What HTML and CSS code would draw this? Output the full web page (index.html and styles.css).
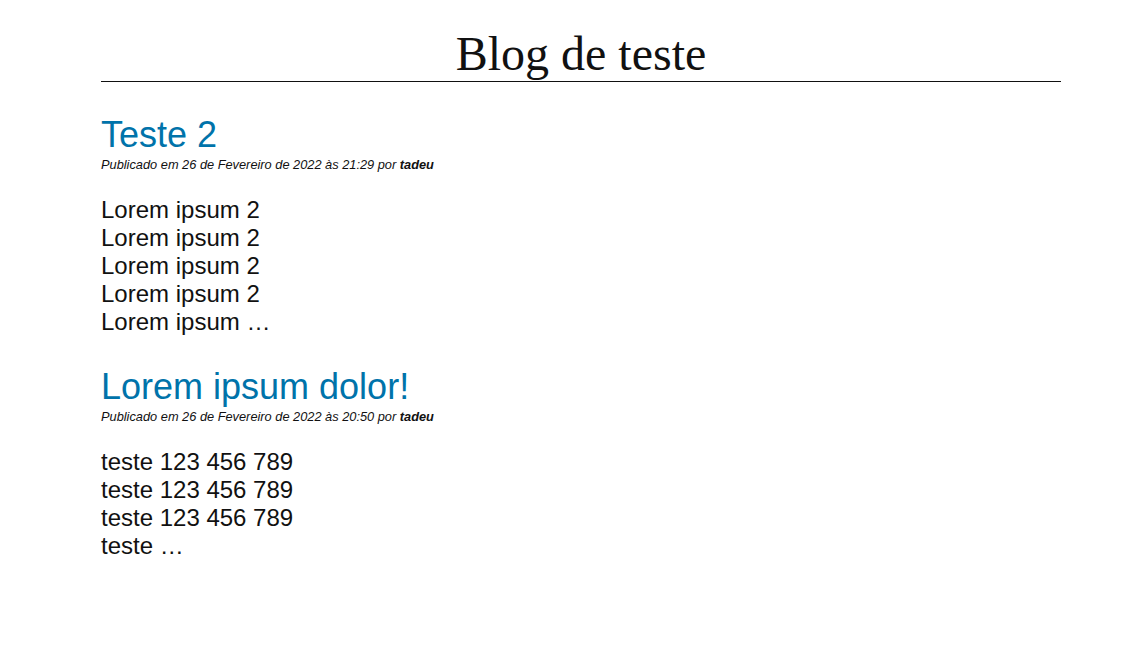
FILE: index.html
```html
<!DOCTYPE html>
<html lang="pt-BR">
<head>
<meta charset="utf-8">
<title>Blog de teste</title>
<link rel="stylesheet" href="styles.css">
</head>
<body>
<div class="page">
  <header class="site-header">
    <h1 class="site-title">Blog de teste</h1>
  </header>
  <main class="posts">
    <article class="post">
      <h2 class="post-title"><a href="#">Teste 2</a></h2>
      <p class="post-meta">Publicado em 26 de Fevereiro de 2022 às 21:29 por <strong>tadeu</strong></p>
      <div class="post-excerpt">
        Lorem ipsum 2<br>
        Lorem ipsum 2<br>
        Lorem ipsum 2<br>
        Lorem ipsum 2<br>
        Lorem ipsum …
      </div>
    </article>
    <article class="post">
      <h2 class="post-title"><a href="#">Lorem ipsum dolor!</a></h2>
      <p class="post-meta">Publicado em 26 de Fevereiro de 2022 às 20:50 por <strong>tadeu</strong></p>
      <div class="post-excerpt">
        teste 123 456 789<br>
        teste 123 456 789<br>
        teste 123 456 789<br>
        teste …
      </div>
    </article>
  </main>
</div>
</body>
</html>
```

FILE: styles.css
```css
html, body {
  margin: 0;
  padding: 0;
  background: #ffffff;
}

body {
  font-family: "Liberation Sans", Arial, sans-serif;
  color: #111111;
}

.page {
  width: 960px;
  margin-left: 101px;
}

.site-header {
  padding-top: 26px;
  border-bottom: 1px solid #111111;
}

.site-title {
  margin: 0;
  font-family: "Liberation Serif", "Times New Roman", serif;
  font-weight: normal;
  font-size: 48px;
  line-height: 55px;
  text-align: center;
  color: #111111;
}

.posts {
  display: flex;
  flex-direction: column;
  padding-top: 32px;
  gap: 30px;
}

.post-title {
  margin: 0;
  font-size: 36px;
  font-weight: normal;
  line-height: 41px;
}

.post-title a {
  color: #0073aa;
  text-decoration: none;
}

.post-meta {
  margin: 2px 0 0;
  font-size: 12.8px;
  font-style: italic;
  line-height: 15px;
}

.post-meta strong {
  font-weight: bold;
}

.post-excerpt {
  margin-top: 24px;
  font-size: 24px;
  line-height: 28px;
}
```
